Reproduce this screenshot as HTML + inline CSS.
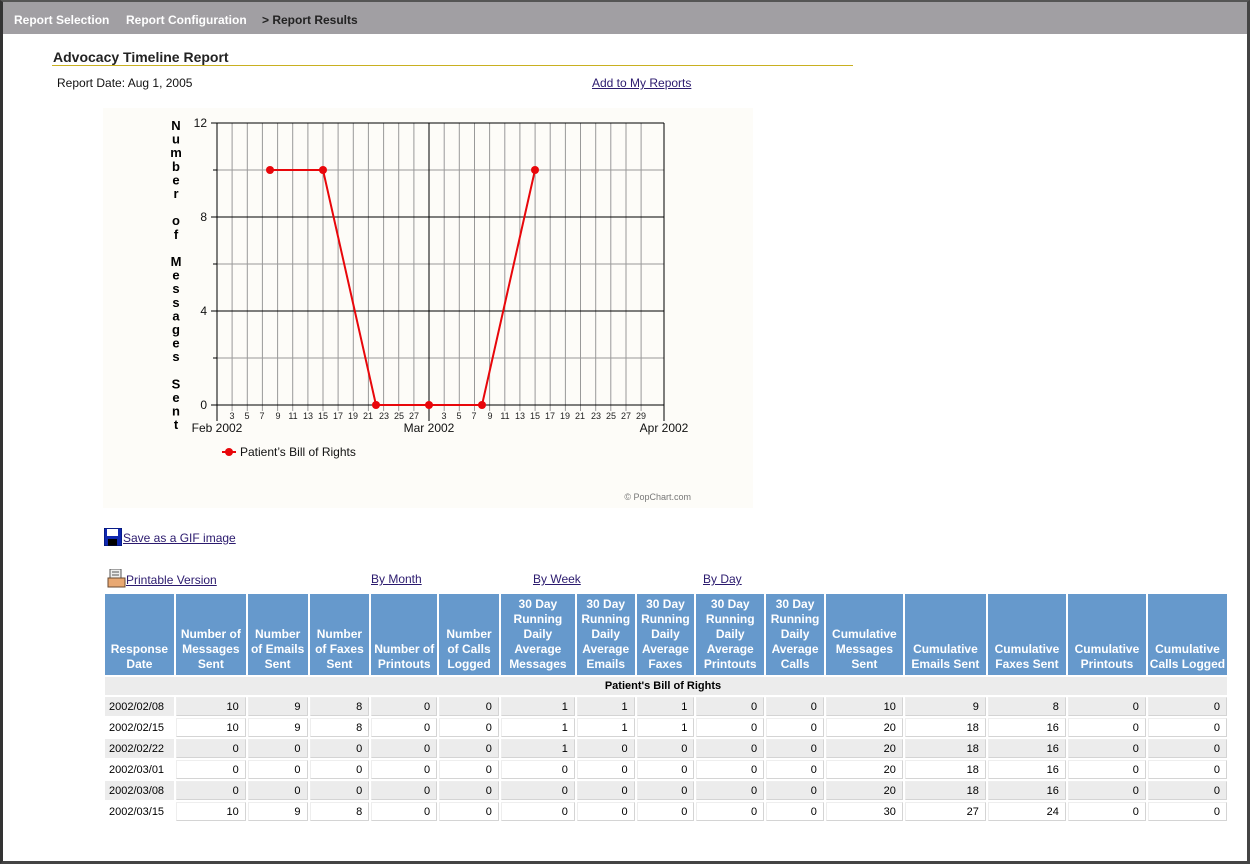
<!DOCTYPE html>
<html><head><meta charset="utf-8"><style>
body{margin:0;width:1250px;height:864px;position:relative;background:#fff;font-family:"Liberation Sans",Arial,sans-serif;overflow:hidden}
.frame{position:absolute;left:0;top:0;width:1244px;height:859px;border-left:3px solid #333;border-right:3px solid #444;border-bottom:3px solid #444;border-top:2px solid #555;box-sizing:content-box}
.nav{position:absolute;left:3px;top:2px;width:1244px;height:32px;background:#a19fa3}
.nav span{position:absolute;top:11px;font-size:12px;font-weight:bold;color:#fff}
.a{position:absolute;font-size:12px;color:#2b1a6e;text-decoration:underline}
table{position:absolute;left:103px;top:592px;border-collapse:separate;border-spacing:2px;table-layout:fixed;width:1126px}
th{background:#6699cc;color:#fff;font-size:12px;font-weight:bold;line-height:15px;vertical-align:bottom;padding:0 1px 3px;height:78px}
td{font-size:11px;text-align:right;padding:0 6px 0 0;height:17px;border:1px solid #d4d4d4;border-top-color:#eee;border-left-color:#eee}
tr.o td{background:#ececec}
td.d{text-align:left;padding-left:4px;border:none;background:#fff}
tr.o td.d{background:#ececec}
td.g{background:#ececec;text-align:center;font-weight:bold;border:none;height:18px;color:#000}
</style></head><body>
<div class="frame"></div>
<div class="nav"><span style="left:11px">Report Selection</span><span style="left:123px">Report Configuration</span><span style="left:259px;color:#222">&gt; Report Results</span></div>
<div style="position:absolute;left:53px;top:49px;font-size:14px;font-weight:bold;color:#222">Advocacy Timeline Report</div>
<div style="position:absolute;left:52px;top:65px;width:801px;height:1px;background:#c9b020"></div>
<div style="position:absolute;left:57px;top:76px;font-size:12px;color:#111">Report Date: Aug 1, 2005</div>
<a class="a" style="left:592px;top:76px">Add to My Reports</a>
<svg style="position:absolute;left:103px;top:108px" width="650" height="400" viewBox="103 108 650 400" font-family="Liberation Sans,Arial,sans-serif">
<rect x="103" y="108" width="650" height="400" fill="#fdfcf8"/>
<g stroke="#999" stroke-width="1">
<line x1="217" x2="664" y1="264" y2="264"/><line x1="217" x2="664" y1="358" y2="358"/><line x1="217" x2="664" y1="170" y2="170"/>
<line x1="232.1" y1="123" x2="232.1" y2="411"/><line x1="247.3" y1="123" x2="247.3" y2="411"/><line x1="262.4" y1="123" x2="262.4" y2="411"/><line x1="277.6" y1="123" x2="277.6" y2="411"/><line x1="292.7" y1="123" x2="292.7" y2="411"/><line x1="307.9" y1="123" x2="307.9" y2="411"/><line x1="323" y1="123" x2="323" y2="411"/><line x1="338.1" y1="123" x2="338.1" y2="411"/><line x1="353.3" y1="123" x2="353.3" y2="411"/><line x1="368.4" y1="123" x2="368.4" y2="411"/><line x1="383.6" y1="123" x2="383.6" y2="411"/><line x1="398.7" y1="123" x2="398.7" y2="411"/><line x1="413.9" y1="123" x2="413.9" y2="411"/>
<line x1="444.2" y1="123" x2="444.2" y2="411"/><line x1="459.3" y1="123" x2="459.3" y2="411"/><line x1="474.5" y1="123" x2="474.5" y2="411"/><line x1="489.6" y1="123" x2="489.6" y2="411"/><line x1="504.8" y1="123" x2="504.8" y2="411"/><line x1="519.9" y1="123" x2="519.9" y2="411"/><line x1="535.1" y1="123" x2="535.1" y2="411"/><line x1="550.2" y1="123" x2="550.2" y2="411"/><line x1="565.4" y1="123" x2="565.4" y2="411"/><line x1="580.5" y1="123" x2="580.5" y2="411"/><line x1="595.7" y1="123" x2="595.7" y2="411"/><line x1="610.8" y1="123" x2="610.8" y2="411"/><line x1="626" y1="123" x2="626" y2="411"/><line x1="641.1" y1="123" x2="641.1" y2="411"/>
</g>
<g stroke="#000" stroke-width="1">
<line x1="211" x2="664" y1="123" y2="123"/><line x1="211" x2="664" y1="217" y2="217"/><line x1="211" x2="664" y1="311" y2="311"/><line x1="211" x2="664" y1="405" y2="405"/>
<line x1="213" x2="217" y1="170" y2="170"/><line x1="213" x2="217" y1="264" y2="264"/><line x1="213" x2="217" y1="358" y2="358"/>
<line x1="217" y1="123" x2="217" y2="421"/><line x1="429" y1="123" x2="429" y2="421"/><line x1="664" y1="123" x2="664" y2="421"/>
</g>
<g font-size="12" text-anchor="end" fill="#111"><text x="207" y="127">12</text><text x="207" y="221">8</text><text x="207" y="315">4</text><text x="207" y="409">0</text></g>
<g font-size="9" text-anchor="middle" fill="#222">
<text x="232" y="419">3</text><text x="247" y="419">5</text><text x="262" y="419">7</text><text x="278" y="419">9</text><text x="293" y="419">11</text><text x="308" y="419">13</text><text x="323" y="419">15</text><text x="338" y="419">17</text><text x="353" y="419">19</text><text x="368" y="419">21</text><text x="384" y="419">23</text><text x="399" y="419">25</text><text x="414" y="419">27</text>
<text x="444" y="419">3</text><text x="459" y="419">5</text><text x="474" y="419">7</text><text x="490" y="419">9</text><text x="505" y="419">11</text><text x="520" y="419">13</text><text x="535" y="419">15</text><text x="550" y="419">17</text><text x="565" y="419">19</text><text x="580" y="419">21</text><text x="596" y="419">23</text><text x="611" y="419">25</text><text x="626" y="419">27</text><text x="641" y="419">29</text>
</g>
<g font-size="12" text-anchor="middle" fill="#111"><text x="217" y="432">Feb 2002</text><text x="429" y="432">Mar 2002</text><text x="664" y="432">Apr 2002</text></g>
<g font-size="13" font-weight="bold" text-anchor="middle" fill="#000">
<text x="176" y="130">N</text><text x="176" y="143.6">u</text><text x="176" y="157.2">m</text><text x="176" y="170.8">b</text><text x="176" y="184.4">e</text><text x="176" y="198">r</text>
<text x="176" y="225.2">o</text><text x="176" y="238.8">f</text>
<text x="176" y="266">M</text><text x="176" y="279.6">e</text><text x="176" y="293.2">s</text><text x="176" y="306.8">s</text><text x="176" y="320.4">a</text><text x="176" y="334">g</text><text x="176" y="347.6">e</text><text x="176" y="361.2">s</text>
<text x="176" y="388.4">S</text><text x="176" y="402">e</text><text x="176" y="415.6">n</text><text x="176" y="429.2">t</text>
</g>
<polyline points="270,170 323,170 376,405 429,405 482,405 535,170" fill="none" stroke="#e8070b" stroke-width="2"/>
<g fill="#e8070b"><circle cx="270" cy="170" r="4"/><circle cx="323" cy="170" r="4"/><circle cx="376" cy="405" r="4"/><circle cx="429" cy="405" r="4"/><circle cx="482" cy="405" r="4"/><circle cx="535" cy="170" r="4"/>
<line x1="222" x2="236" y1="452" y2="452" stroke="#e8070b" stroke-width="2"/><circle cx="229" cy="452" r="4"/></g>
<text x="240" y="456" font-size="12" fill="#111">Patient’s Bill of Rights</text>
<text x="691" y="500" font-size="9" fill="#777" text-anchor="end">© PopChart.com</text>
</svg>
<svg style="position:absolute;left:104px;top:528px" width="18" height="18"><rect x="0" y="0" width="18" height="18" fill="#1028b0"/><rect x="3" y="1" width="11" height="7" fill="#fff"/><rect x="4" y="11" width="9" height="7" fill="#000"/><rect x="0" y="0" width="18" height="18" fill="none" stroke="#001060"/></svg>
<a class="a" style="left:123px;top:531px">Save as a GIF image</a>
<svg style="position:absolute;left:107px;top:569px" width="19" height="19"><rect x="3" y="0" width="11" height="9" fill="#eee" stroke="#555"/><line x1="5" y1="3" x2="12" y2="3" stroke="#555"/><line x1="5" y1="6" x2="12" y2="6" stroke="#555"/><rect x="1" y="9" width="17" height="9" fill="#e9a872" stroke="#6a4a30"/></svg>
<a class="a" style="left:126px;top:573px">Printable Version</a>
<a class="a" style="left:371px;top:572px">By Month</a>
<a class="a" style="left:533px;top:572px">By Week</a>
<a class="a" style="left:703px;top:572px">By Day</a>
<table>
<colgroup><col style="width:68px"><col style="width:69px"><col style="width:59px"><col style="width:59px"><col style="width:65px"><col style="width:59px"><col style="width:73px"><col style="width:57px"><col style="width:57px"><col style="width:67px"><col style="width:57px"><col style="width:76px"><col style="width:80px"><col style="width:77px"><col style="width:77px"><col style="width:78px"></colgroup>
<tr><th>Response Date</th><th>Number of Messages Sent</th><th>Number of Emails Sent</th><th>Number of Faxes Sent</th><th>Number of Printouts</th><th>Number of Calls Logged</th><th>30 Day Running Daily Average Messages</th><th>30 Day Running Daily Average Emails</th><th>30 Day Running Daily Average Faxes</th><th>30 Day Running Daily Average Printouts</th><th>30 Day Running Daily Average Calls</th><th>Cumulative Messages Sent</th><th>Cumulative Emails Sent</th><th>Cumulative Faxes Sent</th><th>Cumulative Printouts</th><th>Cumulative Calls Logged</th></tr>
<tr><td class="g" colspan="16">Patient's Bill of Rights</td></tr>
<tr class="o"><td class="d">2002/02/08</td><td>10</td><td>9</td><td>8</td><td>0</td><td>0</td><td>1</td><td>1</td><td>1</td><td>0</td><td>0</td><td>10</td><td>9</td><td>8</td><td>0</td><td>0</td></tr>
<tr><td class="d">2002/02/15</td><td>10</td><td>9</td><td>8</td><td>0</td><td>0</td><td>1</td><td>1</td><td>1</td><td>0</td><td>0</td><td>20</td><td>18</td><td>16</td><td>0</td><td>0</td></tr>
<tr class="o"><td class="d">2002/02/22</td><td>0</td><td>0</td><td>0</td><td>0</td><td>0</td><td>1</td><td>0</td><td>0</td><td>0</td><td>0</td><td>20</td><td>18</td><td>16</td><td>0</td><td>0</td></tr>
<tr><td class="d">2002/03/01</td><td>0</td><td>0</td><td>0</td><td>0</td><td>0</td><td>0</td><td>0</td><td>0</td><td>0</td><td>0</td><td>20</td><td>18</td><td>16</td><td>0</td><td>0</td></tr>
<tr class="o"><td class="d">2002/03/08</td><td>0</td><td>0</td><td>0</td><td>0</td><td>0</td><td>0</td><td>0</td><td>0</td><td>0</td><td>0</td><td>20</td><td>18</td><td>16</td><td>0</td><td>0</td></tr>
<tr><td class="d">2002/03/15</td><td>10</td><td>9</td><td>8</td><td>0</td><td>0</td><td>0</td><td>0</td><td>0</td><td>0</td><td>0</td><td>30</td><td>27</td><td>24</td><td>0</td><td>0</td></tr>
</table>
</body></html>
